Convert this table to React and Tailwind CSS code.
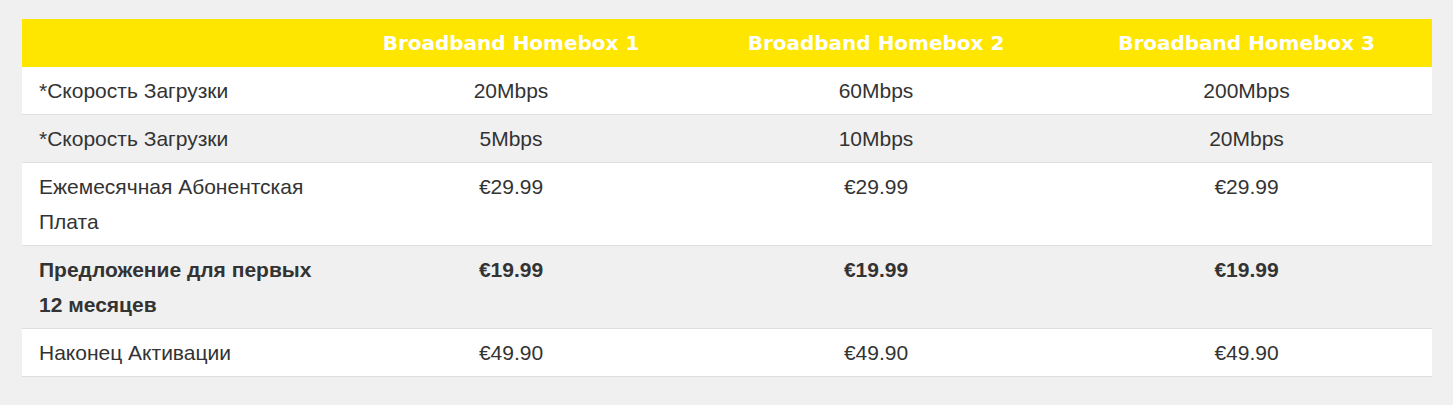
const plans = ['Broadband Homebox 1', 'Broadband Homebox 2', 'Broadband Homebox 3'];

const rows = [
  { label: '*Скорость Загрузки', values: ['20Mbps', '60Mbps', '200Mbps'], bg: 'bg-white' },
  { label: '*Скорость Загрузки', values: ['5Mbps', '10Mbps', '20Mbps'], bg: 'bg-[#f0f0f0]' },
  { label: 'Ежемесячная Абонентская Плата', values: ['€29.99', '€29.99', '€29.99'], bg: 'bg-white' },
  { label: 'Предложение для первых 12 месяцев', values: ['€19.99', '€19.99', '€19.99'], bg: 'bg-[#f0f0f0]', bold: true },
  { label: 'Наконец Активации', values: ['€49.90', '€49.90', '€49.90'], bg: 'bg-white' },
];

export default function App() {
  return (
    <div className="min-h-[405px] bg-[#f0f0f0] pt-[19px] pl-[22px]" style={{ fontFamily: '"Liberation Sans", Arial, sans-serif' }}>
      <table className="w-[1410px] table-fixed border-collapse text-[21px] leading-[35px] text-[#333]">
        <colgroup>
          <col className="w-[309px]" />
          <col className="w-[360px]" />
          <col className="w-[370px]" />
          <col className="w-[371px]" />
        </colgroup>
        <thead>
          <tr className="bg-[#ffe600]">
            <th className="h-[48px] p-0"></th>
            {plans.map(p => (
              <th key={p} className="h-[48px] p-0 text-center text-[20px] font-bold text-white" style={{ fontFamily: '"DejaVu Sans", sans-serif' }}>
                {p}
              </th>
            ))}
          </tr>
        </thead>
        <tbody>
          {rows.map((r, i) => (
            <tr key={i} className={`${r.bg} border-b border-[#dedede] ${r.bold ? 'font-bold' : ''}`}>
              <td className="pt-[6px] pb-[6px] pl-[17px] pr-[16px] align-top">{r.label}</td>
              {r.values.map((v, j) => (
                <td key={j} className="pt-[6px] pb-[6px] text-center align-top">{v}</td>
              ))}
            </tr>
          ))}
        </tbody>
      </table>
    </div>
  );
}
